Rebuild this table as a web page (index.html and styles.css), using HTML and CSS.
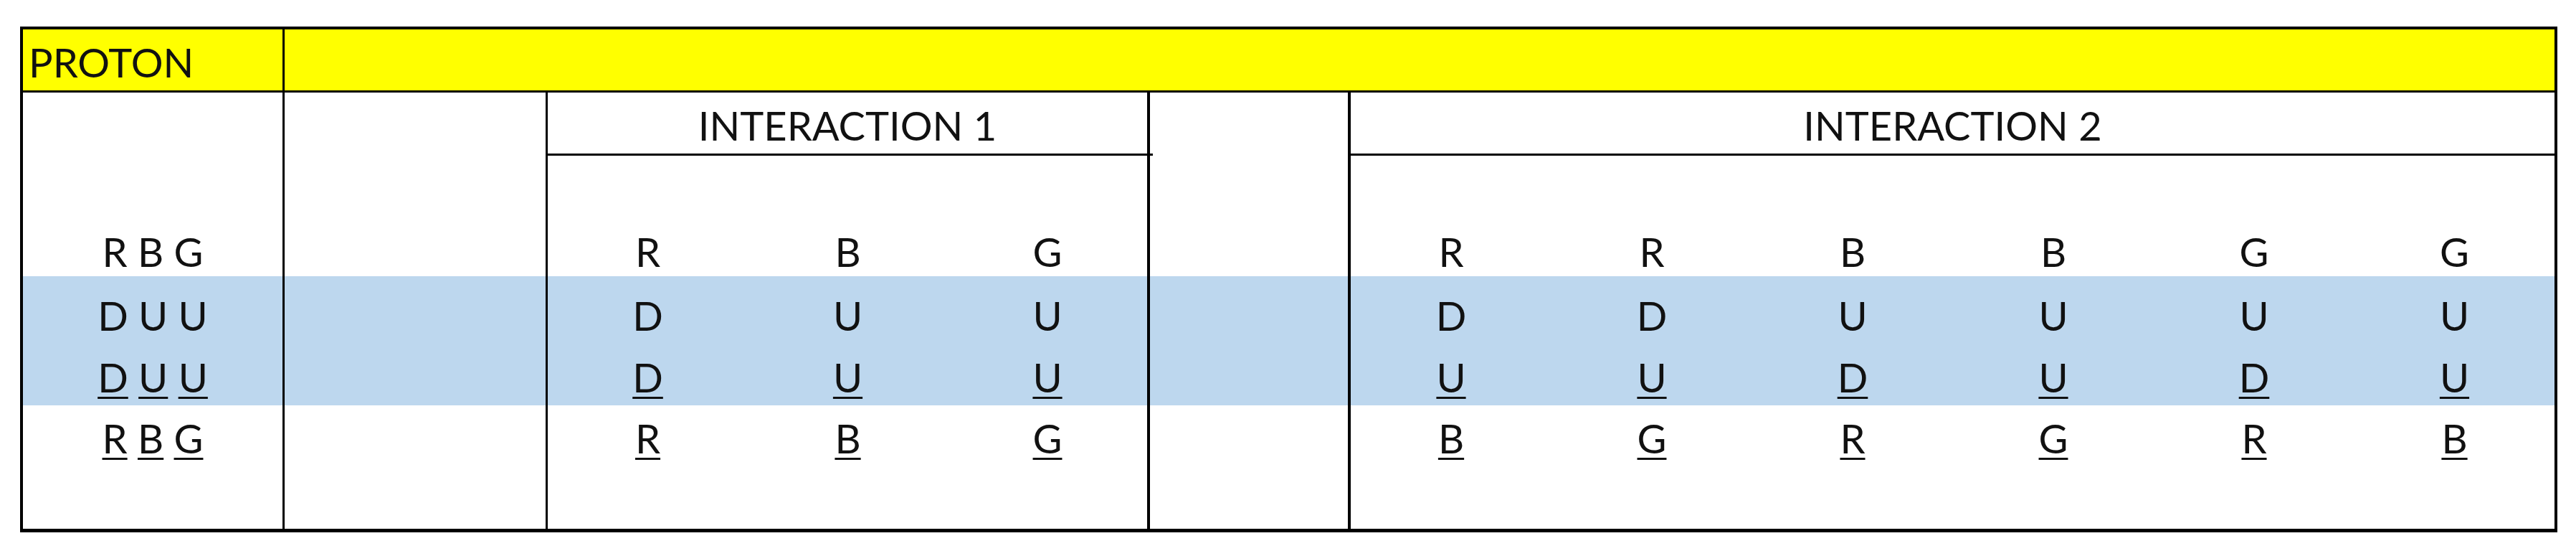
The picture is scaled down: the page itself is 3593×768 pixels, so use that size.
FILE: index.html
```html
<!DOCTYPE html>
<html lang="en">
<head>
<meta charset="utf-8">
<title>Proton</title>
<link rel="stylesheet" href="styles.css">
</head>
<body>
<div class="sheet">
  <div class="title-row">
    <div class="title-cell">PROTON</div>
    <div class="title-rest"></div>
  </div>
  <div class="grid">
    <div class="cell ca tall pad12"><span>R B G</span></div>
    <div class="cell cb tall"></div>
    <div class="cell ihead i1">INTERACTION 1</div>
    <div class="cell cg tall"></div>
    <div class="cell ihead i2">INTERACTION 2</div>

    <div class="cell pad12 s1">R</div>
    <div class="cell pad12 s2">B</div>
    <div class="cell pad12 s3 cx">G</div>
    <div class="cell pad12 s4">R</div>
    <div class="cell pad12 s5">R</div>
    <div class="cell pad12 s6">B</div>
    <div class="cell pad12 s7">B</div>
    <div class="cell pad12 s8">G</div>
    <div class="cell pad12 s9">G</div>

    <div class="cell ca blue pad12">D U U</div>
    <div class="cell cb blue"></div>
    <div class="cell blue pad12">D</div>
    <div class="cell blue pad12">U</div>
    <div class="cell blue pad12 cx">U</div>
    <div class="cell cg blue"></div>
    <div class="cell blue pad12">D</div>
    <div class="cell blue pad12">D</div>
    <div class="cell blue pad12">U</div>
    <div class="cell blue pad12">U</div>
    <div class="cell blue pad12">U</div>
    <div class="cell blue pad12">U</div>

    <div class="cell ca blue pad17"><span><span class="ul">D</span> <span class="ul">U</span> <span class="ul">U</span></span></div>
    <div class="cell cb blue"></div>
    <div class="cell blue pad17"><span class="ul">D</span></div>
    <div class="cell blue pad17"><span class="ul">U</span></div>
    <div class="cell blue pad17 cx"><span class="ul">U</span></div>
    <div class="cell cg blue"></div>
    <div class="cell blue pad17"><span class="ul">U</span></div>
    <div class="cell blue pad17"><span class="ul">U</span></div>
    <div class="cell blue pad17"><span class="ul">D</span></div>
    <div class="cell blue pad17"><span class="ul">U</span></div>
    <div class="cell blue pad17"><span class="ul">D</span></div>
    <div class="cell blue pad17"><span class="ul">U</span></div>

    <div class="cell ca pad12"><span><span class="ul">R</span> <span class="ul">B</span> <span class="ul">G</span></span></div>
    <div class="cell cb"></div>
    <div class="cell pad12"><span class="ul">R</span></div>
    <div class="cell pad12"><span class="ul">B</span></div>
    <div class="cell pad12 cx"><span class="ul">G</span></div>
    <div class="cell cg"></div>
    <div class="cell pad12"><span class="ul">B</span></div>
    <div class="cell pad12"><span class="ul">G</span></div>
    <div class="cell pad12"><span class="ul">R</span></div>
    <div class="cell pad12"><span class="ul">G</span></div>
    <div class="cell pad12"><span class="ul">R</span></div>
    <div class="cell pad12"><span class="ul">B</span></div>

    <div class="cell ca"></div>
    <div class="cell cb"></div>
    <div class="cell"></div>
    <div class="cell"></div>
    <div class="cell cx"></div>
    <div class="cell cg"></div>
    <div class="cell"></div>
    <div class="cell"></div>
    <div class="cell"></div>
    <div class="cell"></div>
    <div class="cell"></div>
    <div class="cell"></div>
  </div>
</div>
</body>
</html>
```

FILE: styles.css
```css
html, body {
  margin: 0;
  padding: 0;
  background: #ffffff;
}

body {
  font-family: Lato, "Open Sans", "Liberation Sans", sans-serif;
  font-size: 56px;
  line-height: 1;
  color: #111111;
}

.sheet {
  box-sizing: border-box;
  width: 3539px;
  margin: 37px 0 0 28px;
  border: 4px solid #000;
  border-bottom-width: 5px;
}

.title-row {
  display: flex;
  height: 88px;
  box-sizing: border-box;
  background: #ffff00;
  border-bottom: 3px solid #000;
}

.title-cell {
  box-sizing: border-box;
  width: 365px;
  border-right: 3px solid #000;
  display: flex;
  align-items: flex-end;
  padding: 0 0 11px 8px;
}

.title-rest {
  flex: 1;
}

.grid {
  display: grid;
  grid-template-columns: 365px 367px 279px 279px 282px 280px 280px 280px 280px 280px 280px 279px;
  grid-template-rows: 88px 168px 89px 91px 80px 92px;
}

.cell {
  box-sizing: border-box;
  display: flex;
  align-items: flex-end;
  justify-content: center;
  min-width: 0;
}

.tall {
  grid-row: span 2;
}

.ca, .cb {
  border-right: 3px solid #000;
}

.cx, .cg {
  border-right: 4px solid #000;
}

.ihead {
  border-bottom: 3px solid #000;
  padding-bottom: 11px;
}

.i1 {
  grid-column: 3 / span 3;
  border-right: 4px solid #000;
  position: relative;
}

.i1::after {
  content: "";
  position: absolute;
  right: -8px;
  bottom: -3px;
  width: 4px;
  height: 3px;
  background: #000;
}

.i2 {
  grid-column: 7 / span 6;
}

.s1 { grid-column: 3; grid-row: 2; }
.s2 { grid-column: 4; grid-row: 2; }
.s3 { grid-column: 5; grid-row: 2; }
.s4 { grid-column: 7; grid-row: 2; }
.s5 { grid-column: 8; grid-row: 2; }
.s6 { grid-column: 9; grid-row: 2; }
.s7 { grid-column: 10; grid-row: 2; }
.s8 { grid-column: 11; grid-row: 2; }
.s9 { grid-column: 12; grid-row: 2; }

.blue {
  background: #bdd7ee;
}

.pad12 {
  padding-bottom: 6px;
}

.pad17 {
  padding-bottom: 11px;
}

.ul {
  text-decoration: underline;
  text-decoration-thickness: 3px;
  text-underline-offset: 6px;
}
```
